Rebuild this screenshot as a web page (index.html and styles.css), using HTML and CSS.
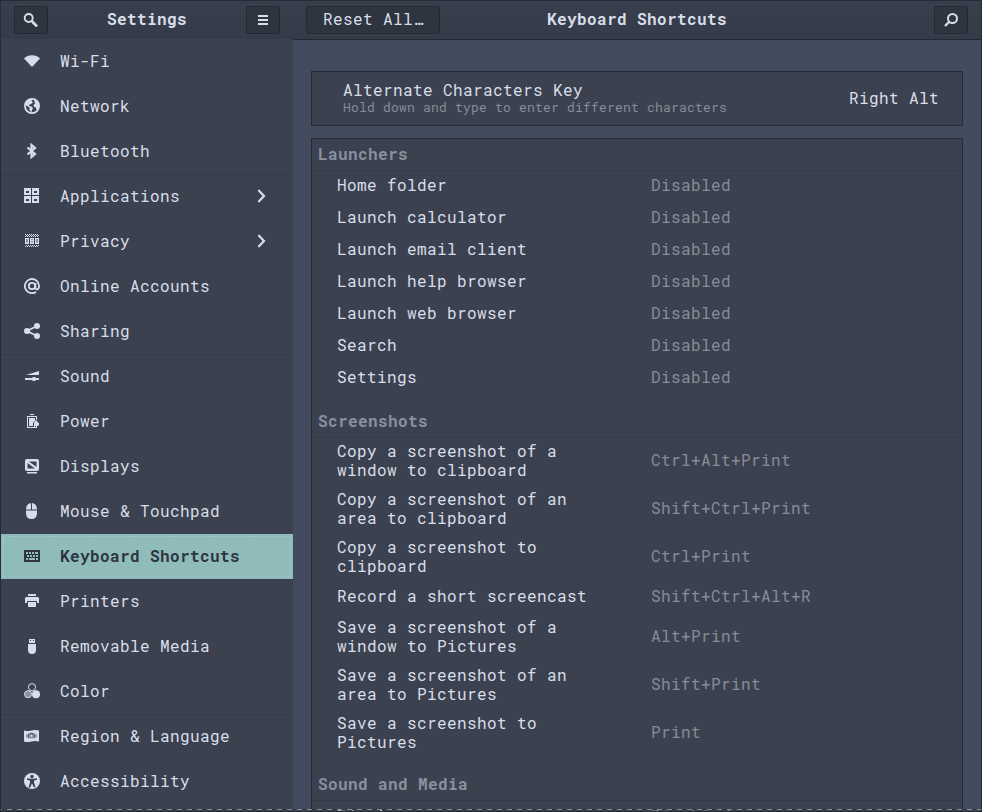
FILE: index.html
```html
<!DOCTYPE html>
<html lang="en">
<head>
<meta charset="utf-8">
<title>Settings</title>
<link rel="stylesheet" href="styles.css">
</head>
<body>
<div class="window">
  <aside class="sidebar">
    <header class="bar bar-side">
      <button class="btn"><svg class="icon" viewBox="0 0 16 16"><circle cx="5.700" cy="6" r="4" fill="none" stroke="currentColor" stroke-width="1.900"/><path d="M8.700 8.600l1.600.3 4.300 4.500-1.500 1.600-4.400-4.300z" fill="currentColor" stroke="currentColor" stroke-width=".6"/></svg></button>
      <h1 class="title">Settings</h1>
      <button class="btn"><svg class="icon" viewBox="0 0 16 16"><path d="M3 3h10v2H3zM3 7h10v2H3zM3 11h10v2H3z" fill="currentColor"/></svg></button>
    </header>
    <nav class="nav">
      <a class="item"><svg class="icon" viewBox="0 0 16 16"><path d="M8 14L0 5.500C4 1.200 12 1.200 16 5.500z" fill="currentColor"/></svg>Wi-Fi</a>
      <a class="item"><svg class="icon" viewBox="0 0 16 16"><circle cx="8" cy="8" r="7.100" fill="none" stroke="currentColor" stroke-width="1.800"/><path d="M1.500 5L5 1.500 8 1l-.3 2L9 4.500 7 6 5.500 6.500 5 8l2.500.5L9 10l-1 2-.5 2.500L5.500 12V9.500L3 8 1.500 7zM10 1.500L14 4l1 4-.5 3-2 1.500-.5-3-2-.5-.5-2L11 5.500z" fill="currentColor"/></svg>Network</a>
      <a class="item"><svg class="icon" viewBox="0 0 16 16"><path d="M3.500 4.500L11 11 7.500 14V2L11 5l-7.500 6.500" fill="none" stroke="currentColor" stroke-width="2.200"/></svg>Bluetooth</a>
      <a class="item divided"><svg class="icon" viewBox="0 0 16 16"><path fill="currentColor" fill-rule="evenodd" d="M0 0h7v7H0zM8 0h7v7H8zM0 8h7v7H0zM8 8h7v7H8zM2 3v2h3V3zM10 3v2h3V3zM2 11v2h3v-2zM10 11v2h3v-2z"/></svg>Applications<svg class="icon arrow" viewBox="0 0 16 16"><path d="M5 2.700l5 5.300-5 5.300" fill="none" stroke="currentColor" stroke-width="2.200" stroke-linecap="round"/></svg></a>
      <a class="item"><svg class="icon" viewBox="0 0 16 16"><path fill="currentColor" fill-rule="evenodd" d="M1 5h4v6H1zM6 5h4v6H6zM11 5h4v6h-4zM2.500 6v3.500h1V6zM7.500 6v1h1V6zM7.500 8v1.500h1V8zM12.500 6v3.500h1V6z"/><path fill="none" stroke="currentColor" stroke-dasharray="1 1" d="M1 1.500h14M2 2.500h13M1 3.500h14M2 12.500h13M1 13.500h14"/></svg>Privacy<svg class="icon arrow" viewBox="0 0 16 16"><path d="M5 2.700l5 5.300-5 5.300" fill="none" stroke="currentColor" stroke-width="2.200" stroke-linecap="round"/></svg></a>
      <a class="item"><svg class="icon" viewBox="0 0 16 16"><path d="M12 14A7.100 7.100 0 1 1 15.100 8c0 4-3.700 4.200-3.700 1.500V5" fill="none" stroke="currentColor" stroke-width="1.800"/><circle cx="8" cy="8" r="3.200" fill="none" stroke="currentColor" stroke-width="1.800"/></svg>Online Accounts</a>
      <a class="item"><svg class="icon" viewBox="0 0 16 16"><g fill="currentColor"><circle cx="3" cy="8" r="3"/><circle cx="13" cy="3" r="3"/><circle cx="13" cy="13" r="3"/></g><path d="M13 3L3 8l10 5" fill="none" stroke="currentColor" stroke-width="1.900"/></svg>Sharing</a>
      <a class="item divided"><svg class="icon" viewBox="0 0 16 16"><path d="M2 7L15 3v4zM1 10h7l1-1h2l1 1h3v2h-3l-1 1H9l-1-1H1z" fill="currentColor"/></svg>Sound</a>
      <a class="item"><svg class="icon" viewBox="0 0 16 16"><path fill="currentColor" d="M6 1h4v1H6zM3 3h10v4h-1V4H4v10h8v1H3zM5 5h6v3l-2 2v3H5zM12 7l2 2.500 1 .5v2l-1 1h-1v2h-1v-2h-1v2h-1v-5z"/></svg>Power</a>
      <a class="item"><svg class="icon" viewBox="0 0 16 16"><path fill="currentColor" fill-rule="evenodd" d="M3 1h10q2 0 2 2v8q0 2-2 2H3q-2 0-2-2V3q0-2 2-2zM3.500 5v5.500h7.500zM5 3.500l7.500 5.500V3.500zM3 14h10v1.500H3z"/></svg>Displays</a>
      <a class="item"><svg class="icon" viewBox="0 0 16 16"><path fill="currentColor" d="M2 6.500Q2 .7 7 0v6.500zM8 0q5 .7 5 6.500H8zM2 7.500h11v3q-.5 5.500-5.500 5.500T2 10.500z"/></svg>Mouse &amp; Touchpad</a>
      <a class="item selected"><svg class="icon" viewBox="0 0 16 16"><path fill="currentColor" fill-rule="evenodd" d="M0 2h16v12H0zM2 4v2h2V4zM5 4v2h2V4zM8 4v2h2V4zM11 4v2h3V4zM3 7v2h2V7zM6 7v2h2V7zM9 7v2h2V7zM12 7v2h2V7zM2 10v2h2v-2zM5 10v2h6v-2zM12 10v2h2v-2z"/></svg>Keyboard Shortcuts</a>
      <a class="item"><svg class="icon" viewBox="0 0 16 16"><path fill="currentColor" d="M4 1h8v2H4zM2 4h12l1 1v5h-2V8H3v2H1V5zM4 9h8v5H4z"/></svg>Printers</a>
      <a class="item"><svg class="icon" viewBox="0 0 16 16"><path fill="currentColor" fill-rule="evenodd" d="M5 1h6v4H5zM6 2v1h1V2zM9 2v1h1V2zM4 6h8v6q0 4-4 4t-4-4z"/></svg>Removable Media</a>
      <a class="item"><svg class="icon" viewBox="0 0 16 16"><circle cx="8" cy="4.200" r="3.600" fill="none" stroke="currentColor"/><circle cx="4" cy="11.200" r="3.500" fill="currentColor" fill-opacity=".5" stroke="currentColor"/><circle cx="12" cy="11.200" r="4" fill="currentColor"/></svg>Color</a>
      <a class="item divided"><svg class="icon" viewBox="0 0 16 16"><path fill="currentColor" d="M0 2.500q4 1 7.500 0t7.500 0V13.500q-4-1-7.500 0T0 13.500z"/><g class="cut"><circle cx="7.500" cy="8" r="1.800"/><path d="M5.200 6Q7.500 4 9.800 6M4.800 5.500q-1.500 2.500.2 5M10.200 5.500q1.500 2.500-.2 5M3 6.500v3M12 6.500v3"/></g></svg>Region &amp; Language</a>
      <a class="item"><svg class="icon" viewBox="0 0 16 16"><circle cx="8" cy="8" r="8" fill="currentColor"/><g class="hole"><circle cx="8" cy="3.500" r="1.700"/><path d="M3 5.300l4 .5h2l4-.5v1.400l-3 .8v2l1.500 4.500-1.300.5L8 10.500 5.800 15l-1.300-.5L6 9.500v-2l-3-.8z"/></g></svg>Accessibility</a>
    </nav>
  </aside>
  <main class="main">
    <header class="bar bar-main">
      <button class="btn btn-text">Reset All…</button>
      <h1 class="title">Keyboard Shortcuts</h1>
      <button class="btn"><svg class="icon" viewBox="0 0 16 16"><circle cx="9.500" cy="6.500" r="4.500" fill="none" stroke="currentColor" stroke-width="2"/><path d="M6.300 9.700L2 14" stroke="currentColor" stroke-width="2.300"/></svg></button>
    </header>
    <div class="content">
      <section class="card">
        <div><div class="card-title">Alternate Characters Key</div><div class="card-note">Hold down and type to enter different characters</div></div>
        <div class="card-value">Right Alt</div>
      </section>
      <section class="list">
        <h2 class="group first">Launchers</h2>
        <div class="row"><span class="name">Home folder</span><span class="key">Disabled</span></div>
        <div class="row"><span class="name">Launch calculator</span><span class="key">Disabled</span></div>
        <div class="row"><span class="name">Launch email client</span><span class="key">Disabled</span></div>
        <div class="row"><span class="name">Launch help browser</span><span class="key">Disabled</span></div>
        <div class="row"><span class="name">Launch web browser</span><span class="key">Disabled</span></div>
        <div class="row"><span class="name">Search</span><span class="key">Disabled</span></div>
        <div class="row"><span class="name">Settings</span><span class="key">Disabled</span></div>
        <h2 class="group">Screenshots</h2>
        <div class="row"><span class="name">Copy a screenshot of a window to clipboard</span><span class="key">Ctrl+Alt+Print</span></div>
        <div class="row"><span class="name">Copy a screenshot of an area to clipboard</span><span class="key">Shift+Ctrl+Print</span></div>
        <div class="row"><span class="name">Copy a screenshot to clipboard</span><span class="key">Ctrl+Print</span></div>
        <div class="row"><span class="name">Record a short screencast</span><span class="key">Shift+Ctrl+Alt+R</span></div>
        <div class="row"><span class="name">Save a screenshot of a window to Pictures</span><span class="key">Alt+Print</span></div>
        <div class="row"><span class="name">Save a screenshot of an area to Pictures</span><span class="key">Shift+Print</span></div>
        <div class="row"><span class="name">Save a screenshot to Pictures</span><span class="key">Print</span></div>
        <h2 class="group">Sound and Media</h2>
        <div class="row"><span class="name">Eject</span><span class="key">Disabled</span></div>
      </section>
    </div>
  </main>
  <div class="edge"></div>
</div>
</body>
</html>
```
FILE: styles.css
```css
* { box-sizing: border-box; }

body {
  margin: 0;
  overflow: hidden;
  background: #262b35;
  color: #d8dee9;
  font: 16px/19px "Roboto Mono", "DejaVu Sans Mono", monospace;
  letter-spacing: 0.4px;
}

.window {
  position: relative;
  display: flex;
  width: 982px;
  height: 812px;
  overflow: hidden;
  border: 1px solid #262b35;
}

.sidebar { width: 292px; flex: none; background: #3c4150; }
.main { flex: 1; min-width: 0; background: #434b5e; }

.bar {
  display: flex;
  align-items: center;
  justify-content: space-between;
  background: linear-gradient(#383e4c, #353b48);
}
.bar-side { height: 38px; padding: 0 13px; }
.bar-main { height: 39px; padding: 0 13px; border-bottom: 1px solid #222831; }

.title { margin: 0; padding-bottom: 3px; font-size: 16px; line-height: 19px; font-weight: bold; }
.bar-main .title { margin-left: -100px; }

.btn {
  display: flex;
  align-items: center;
  justify-content: center;
  width: 34px;
  height: 28px;
  padding: 0;
  border: 1px solid #232831;
  border-radius: 3px;
  background: #2e3440;
  color: inherit;
  font: inherit;
  letter-spacing: inherit;
}
.btn-text { width: 134px; padding-bottom: 3px; }

.icon { width: 16px; height: 16px; flex: none; display: block; }
.cut { fill: none; stroke: #3c4150; stroke-width: 0.9; }
.hole { fill: #3c4150; }

.item {
  display: flex;
  align-items: center;
  gap: 20px;
  height: 45px;
  padding: 0 23px 1.2px;
}
.divided { box-shadow: inset 0 1px #363b49; }
.arrow { margin-left: auto; }
.selected {
  background: #8fbcbb;
  color: #2e3440;
  font-weight: bold;
  outline: 1px dashed #9fc6c5;
  outline-offset: -3px;
}

.content { padding: 31px 18px 0; }

.card {
  display: flex;
  align-items: center;
  justify-content: space-between;
  height: 55px;
  padding: 0 23px 2px 31px;
  border: 1px solid #242932;
  background: #3c4150;
}
.card-note { font-size: 13px; line-height: 16px; letter-spacing: 0.2px; color: #868c99; }

.list { margin-top: 12px; border: 1px solid #242932; background: #3c4150; }
.group {
  height: 44px;
  margin: 0 0 -1px;
  padding: 17px 6px 0;
  border-bottom: 1px solid #363b49;
  font-size: 16px;
  font-weight: bold;
  color: #8a909e;
}
.first { height: 32px; padding-top: 5px; }

.row {
  display: flex;
  align-items: center;
  min-height: 32px;
  padding: 3.8px 0 6.2px 25px;
}
.name { width: 259px; margin-right: 55px; }
.key { color: #868c99; }

.edge {
  position: absolute;
  left: 0;
  right: 0;
  bottom: 1px;
  height: 1px;
  background: repeating-linear-gradient(90deg, #868c99 0 1px, #2e3440 1px 6px, #868c99 6px 10px);
}
```
